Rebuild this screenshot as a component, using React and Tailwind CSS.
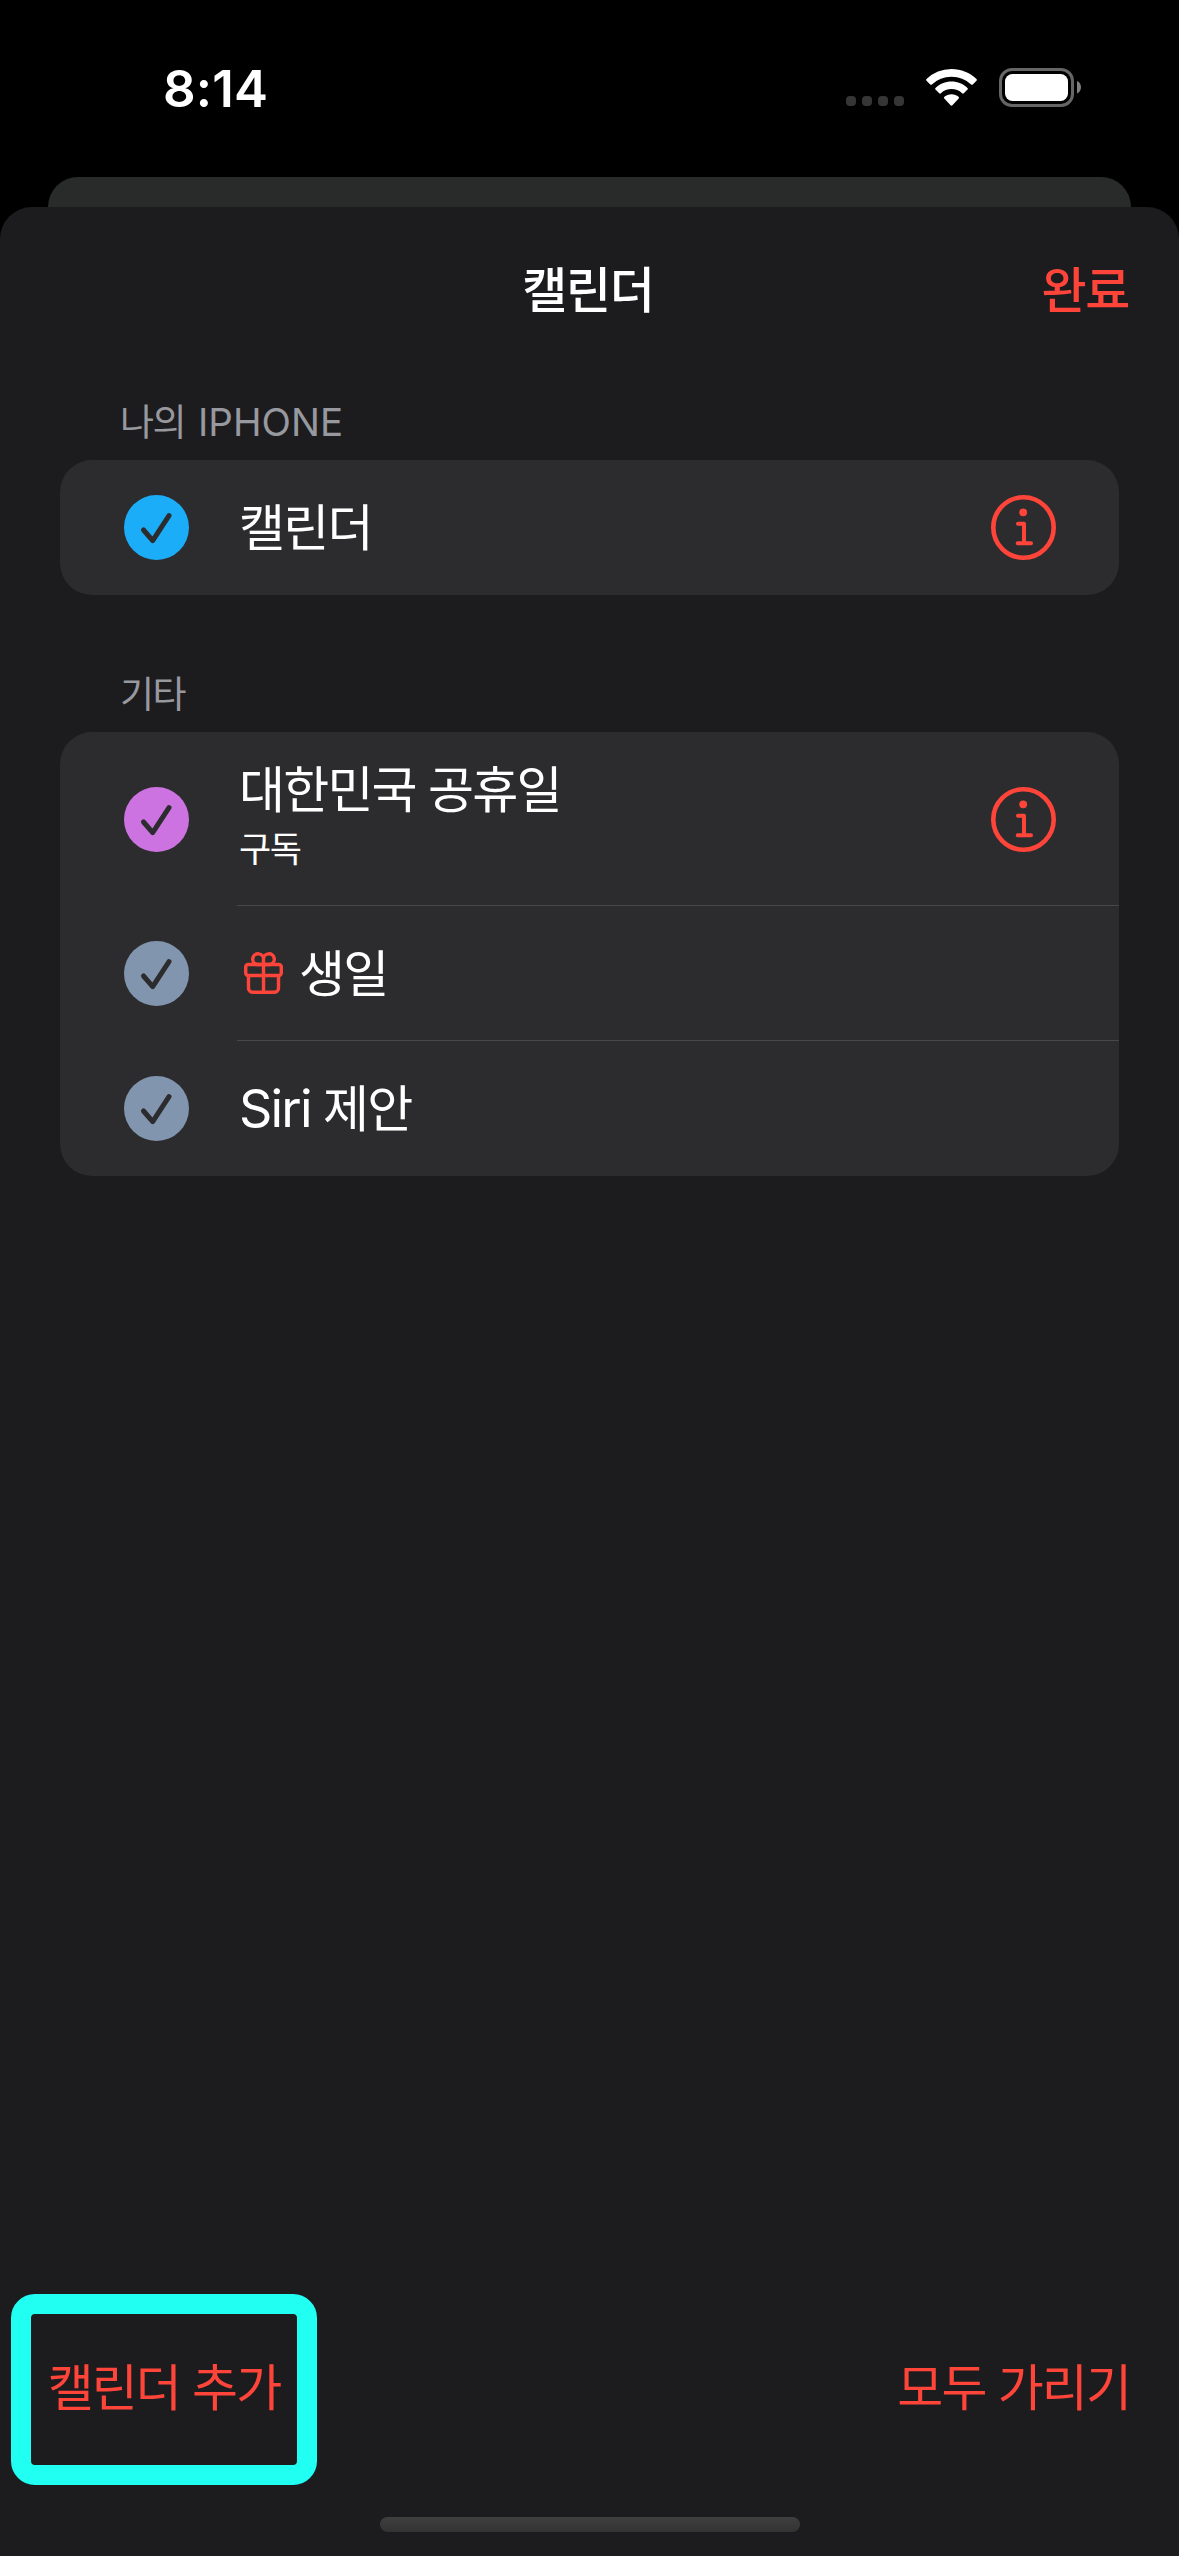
const sections = [
  {
    title: '나의 IPHONE',
    rows: [{ name: '캘린더', color: 'text-[#1badf8]', info: true }],
  },
  {
    title: '기타',
    rows: [
      { name: '대한민국 공휴일', detail: '구독', color: 'text-[#cc73e1]', info: true },
      { name: '생일', color: 'text-[#8295af]', gift: true },
      { name: 'Siri 제안', color: 'text-[#8295af]' },
    ],
  },
]

// latin runs sit a little larger than the hangul around them
function MixedText({ children, latin }) {
  return children.split(/([A-Za-z]+)/).map((part, i) =>
    i % 2 ? (
      <span key={i} className={`text-[1.04em] leading-none ${latin}`}>{part}</span>
    ) : (
      part
    ),
  )
}

function WifiIcon() {
  return (
    <svg className="w-[51px] h-[37px]" viewBox="0 0 51 37" fill="white">
      <path d="M25.5 0C35.2 0 44 3.8 50.5 10c.5.5.5 1.2 0 1.7l-3.7 3.7c-.5.5-1.2.5-1.7 0A28.5 28.5 0 0 0 25.5 7.700a28.500 28.500 0 0 0-19.600 7.700c-.5.5-1.200.5-1.700 0L.5 11.700c-.5-.5-.5-1.200 0-1.700A36.200 36.200 0 0 1 25.500 0Z" />
      <path d="M25.5 12.5c6.200 0 11.800 2.400 16 6.400.5.5.5 1.200 0 1.700l-3.700 3.700c-.5.5-1.200.5-1.700 0a15.500 15.500 0 0 0-21.200 0c-.5.5-1.200.5-1.700 0L9.500 20.600c-.5-.5-.5-1.200 0-1.700 4.200-4 9.800-6.400 16-6.400Z" />
      <path d="M25.5 25.2c2.700 0 5.200 1 7.100 2.600.5.5.5 1.200.1 1.700l-6.300 6.800c-.5.6-1.300.6-1.800 0l-6.300-6.800c-.4-.5-.4-1.200.1-1.700 1.900-1.600 4.400-2.600 7.100-2.600Z" />
    </svg>
  )
}

function BatteryIcon() {
  return (
    <svg className="w-[83px] h-[39px]" viewBox="0 0 83 39">
      <rect x="1.5" y="1.5" width="72" height="36" rx="11.5" fill="none" stroke="#666" strokeWidth="3" />
      <rect x="6" y="6" width="63" height="27" rx="7.5" fill="white" />
      <path d="M78 13c2.6.9 4 3.4 4 6.2s-1.4 5.3-4 6.2Z" fill="#808080" />
    </svg>
  )
}

function StatusBar() {
  return (
    <div className="flex h-[177px] items-start justify-between pl-[163px] pr-[97px] pt-[68px]">
      <span className="text-[51px] leading-[41px] font-semibold tracking-[0.2px] text-white">8:14</span>
      <div className="flex items-start">
        <div className="mt-7 mr-[22px] flex gap-1.5">
          {[0, 1, 2, 3].map((n) => (
            <span key={n} className="size-2.5 rounded-[4px] bg-[#363636]" />
          ))}
        </div>
        <div className="mt-px mr-[22px]">
          <WifiIcon />
        </div>
        <BatteryIcon />
      </div>
    </div>
  )
}

function CheckIcon({ color }) {
  return (
    <svg className={`size-[65px] shrink-0 ${color}`} viewBox="0 0 65 65" fill="none">
      <circle cx="32.5" cy="32.5" r="32.5" fill="currentColor" />
      <path d="M19.5 35L28.7 45.7L45 20.7" stroke="#2c2c2e" strokeWidth="5" strokeLinecap="round" strokeLinejoin="round" />
    </svg>
  )
}

function InfoIcon() {
  return (
    <svg className="size-[65px] shrink-0" viewBox="0 0 65 65" fill="none" stroke="#ff453a">
      <circle cx="32.5" cy="32.5" r="30.2" strokeWidth="4.6" />
      <circle cx="32.2" cy="17.3" r="3.9" fill="#ff453a" stroke="none" />
      <path d="M27 28.7H33V48.3M26.7 48.3H40" strokeWidth="4" strokeLinecap="round" strokeLinejoin="round" />
    </svg>
  )
}

function GiftIcon() {
  return (
    <svg className="mr-3.5 mb-0.5 ml-[7px] h-[42px] w-[39px] shrink-0" viewBox="0 0 39 42" fill="none" stroke="#ff453a" strokeWidth="3.4">
      <rect x="1.7" y="12.5" width="35.6" height="11" rx="2.5" />
      <path d="M4.5 23.5V36.3a4 4 0 0 0 4 4H30.5a4 4 0 0 0 4-4V23.5M19.5 12V40.3" />
      <path d="M19.5 12.5H13A5.4 5.4 0 1 1 19.5 7.5ZM19.5 12.5H26A5.4 5.4 0 1 0 19.5 7.5Z" />
    </svg>
  )
}

function Row({ row, last }) {
  return (
    <li className={`flex items-center pl-16 ${row.detail ? 'h-[174px]' : 'h-[135px]'}`}>
      <CheckIcon color={row.color} />
      <div className={`ml-12 flex h-full flex-1 items-center pr-[63px] ${last ? '' : 'border-b border-[#48484a] pt-px'}`}>
        {row.gift && <GiftIcon />}
        <div className="flex-1 pl-0.5">
          <p className="text-[50px] leading-[60px] tracking-[-1.8px]">
            <MixedText latin="tracking-[-1.8px]">{row.name}</MixedText>
          </p>
          {row.detail && <p className="mt-1 mb-1 text-[35px] leading-[50px] tracking-[-1.5px]">{row.detail}</p>}
        </div>
        {row.info && (
          <button type="button">
            <InfoIcon />
          </button>
        )}
      </div>
    </li>
  )
}

function Section({ section }) {
  return (
    <section>
      <h2 className="ml-[60px] h-[50px] text-[37px] leading-[52px] tracking-[-1.5px] [word-spacing:4px] text-[#98989f]">
        <MixedText latin="tracking-normal">{section.title}</MixedText>
      </h2>
      <ul className="mt-[13px] overflow-hidden rounded-[32px] bg-[#2c2c2e] text-white">
        {section.rows.map((row, i) => (
          <Row key={row.name} row={row} last={i === section.rows.length - 1} />
        ))}
      </ul>
    </section>
  )
}

function App() {
  return (
    <div className="flex h-[2556px] w-[1179px] flex-col overflow-hidden bg-black font-['Inter','Noto_Sans_CJK_KR',sans-serif]">
      <StatusBar />
      {/* edge of the sheet behind */}
      <div className="mx-12 h-[30px] rounded-t-[30px] bg-[#292a2a]" />
      <div className="flex flex-1 flex-col rounded-t-[32px] bg-[#1c1c1e]">
        <header className="grid grid-cols-3 items-center pr-[50px] pl-[47px] pt-[54px] text-[49px] leading-[60px] font-medium tracking-[-1.3px]">
          <h1 className="col-start-2 text-center text-white">캘린더</h1>
          <button type="button" className="text-right text-[#ff453a]">완료</button>
        </header>
        <main className="mt-[76px] flex flex-1 flex-col gap-[74px] px-[60px]">
          {sections.map((section) => (
            <Section key={section.title} section={section} />
          ))}
        </main>
        <footer className="flex items-center justify-between pr-[49px] pl-[11px] text-[50px] leading-[60px] tracking-[-1.9px] text-[#ff453a]">
          <button type="button" className="h-[191px] w-[306px] rounded-[24px] border-[20px] border-[#21fff3] pb-[3px] whitespace-nowrap">
            캘린더 추가
          </button>
          <button type="button" className="pb-[3px]">모두 가리기</button>
        </footer>
        <div className="mx-auto mt-8 mb-6 h-[15px] w-[420px] rounded-full bg-linear-to-b from-[#3f3f3f] to-[#333333]" />
      </div>
    </div>
  )
}

export default App
